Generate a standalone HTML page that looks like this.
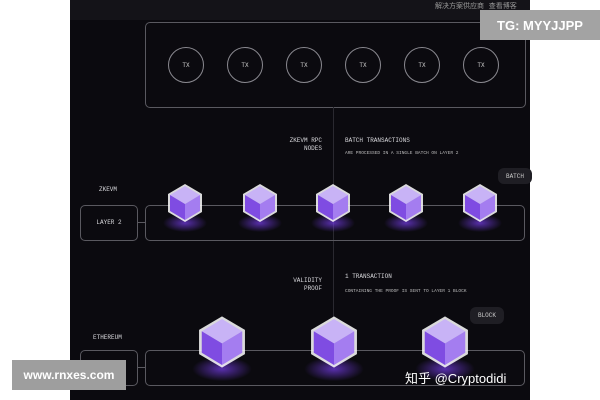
<!DOCTYPE html>
<html><head><meta charset="utf-8"><style>
body{margin:0;width:600px;height:400px;background:#fff;position:relative;overflow:hidden;font-family:"Liberation Mono",monospace;}
.a{position:absolute}
.panel{left:70px;top:0;width:460px;height:400px;background:#0b0a0f}
.strip{left:70px;top:0;width:460px;height:20px;background:#141318}
.box{border:1px solid #5a5960;border-radius:5px}
.c{width:34px;height:34px;border:1px solid #8a8990;border-radius:50%;color:#ccc;font-size:6px;display:flex;align-items:center;justify-content:center}
.t{color:#d8d8dc;font-size:6px;line-height:8px;white-space:nowrap}
.s{color:#bbb;font-size:4.5px}
.tag{background:#1f1e24;border-radius:6px;color:#ccc;font-size:6px;display:flex;align-items:center;justify-content:center}
</style></head><body>
<div class="a panel"></div><div class="a strip"></div>
<div class="a" style="left:435px;top:1px;font-size:7px;color:#999;font-family:'Noto Sans CJK SC',sans-serif">解决方案供应商 &nbsp; 查看博客</div>
<div class="a box" style="left:145px;top:22px;width:379px;height:84px"></div>
<div class="a c" style="left:168px;top:47px">TX</div>
<div class="a c" style="left:227px;top:47px">TX</div>
<div class="a c" style="left:286px;top:47px">TX</div>
<div class="a c" style="left:345px;top:47px">TX</div>
<div class="a c" style="left:404px;top:47px">TX</div>
<div class="a c" style="left:463px;top:47px">TX</div>
<div class="a" style="left:480px;top:10px;width:120px;height:30px;background:#a3a3a3;color:#fff;font:bold 13px 'Liberation Sans',sans-serif;display:flex;align-items:center;justify-content:center">TG: MYYJJPP</div>
<div class="a" style="left:333px;top:107px;width:1px;height:245px;background:#2a2930"></div>
<div class="a t" style="left:262px;top:137px;width:60px;text-align:right">ZKEVM RPC<br>NODES</div>
<div class="a t" style="left:345px;top:137px">BATCH TRANSACTIONS</div>
<div class="a t s" style="left:345px;top:150px">ARE PROCESSED IN A SINGLE BATCH ON LAYER 2</div>
<div class="a tag" style="left:498px;top:168px;width:34px;height:16px">BATCH</div>
<div class="a t" style="left:99px;top:186px">ZKEVM</div>
<div class="a box t" style="left:80px;top:205px;width:56px;height:34px;display:flex;align-items:center;justify-content:center">LAYER 2</div>
<div class="a" style="left:137px;top:222px;width:8px;height:1px;background:#5a5960"></div>
<div class="a box" style="left:145px;top:205px;width:378px;height:34px"></div>
<div class="a t" style="left:262px;top:277px;width:60px;text-align:right">VALIDITY<br>PROOF</div>
<div class="a t" style="left:345px;top:273px">1 TRANSACTION</div>
<div class="a t s" style="left:345px;top:288px">CONTAINING THE PROOF IS SENT TO LAYER 1 BLOCK</div>
<div class="a tag" style="left:470px;top:307px;width:34px;height:17px">BLOCK</div>
<div class="a t" style="left:93px;top:334px">ETHEREUM</div>
<div class="a box t" style="left:80px;top:350px;width:56px;height:34px;display:flex;align-items:center;justify-content:center;color:#888">LAYER 1</div>
<div class="a" style="left:137px;top:367px;width:8px;height:1px;background:#5a5960"></div>
<div class="a box" style="left:145px;top:350px;width:378px;height:34px"></div>
<svg class="a" style="left:0;top:0" width="600" height="400">
<defs><radialGradient id="g"><stop offset="0" stop-color="#7a3ff0" stop-opacity=".7"/><stop offset="1" stop-color="#7a3ff0" stop-opacity="0"/></radialGradient>
<g id="cube"><ellipse cx="0" cy="20" rx="22" ry="9" fill="url(#g)"/>
<path d="M0-19 17-9 17 9 0 19-17 9-17-9Z" fill="#fff" opacity=".85"/>
<path d="M0-17 15-8 0 1-15-8Z" fill="#c8b3f6"/>
<path d="M-15-8 0 1 0 17-15 8Z" fill="#7f4ce2"/>
<path d="M15-8 0 1 0 17 15 8Z" fill="#a47df0"/></g></defs>
<use href="#cube" x="185" y="203"/><use href="#cube" x="260" y="203"/><use href="#cube" x="333" y="203"/><use href="#cube" x="406" y="203"/><use href="#cube" x="480" y="203"/>
<use href="#cube" transform="translate(222 342) scale(1.35)"/><use href="#cube" transform="translate(334 342) scale(1.35)"/><use href="#cube" transform="translate(445 342) scale(1.35)"/>
</svg>
<div class="a" style="left:12px;top:360px;width:114px;height:30px;background:#9e9e9e;color:#fff;font:bold 12px 'Liberation Sans',sans-serif;display:flex;align-items:center;justify-content:center">www.rnxes.com</div>
<div class="a" style="left:405px;top:368px;color:#fff;font:13px 'Liberation Sans','Noto Sans CJK SC',sans-serif">知乎 @Cryptodidi</div>
</body></html>
